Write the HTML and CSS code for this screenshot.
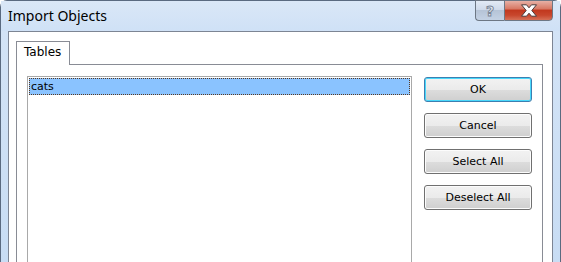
FILE: index.html
```html
<!DOCTYPE html>
<html>
<head>
<meta charset="utf-8">
<link rel="stylesheet" href="styles.css">
</head>
<body>
<div class="window">
  <div class="titlebar">
    <span class="title">Import Objects</span>
    <div class="caption-btns">
      <div class="cbtn help"><span>?</span></div>
      <div class="cbtn close">
        <svg width="22" height="13" viewBox="0 0 22 13">
          <path d="M3.5 0.8 H8.5 L11 3.8 L13.5 0.8 H18.5 L13.8 6.5 L18.5 12.2 H13.5 L11 9.2 L8.5 12.2 H3.5 L8.2 6.5 Z" fill="#fff" stroke="#4a3a3a" stroke-width="1" stroke-linejoin="round"/>
        </svg>
      </div>
    </div>
  </div>
  <div class="client">
    <div class="tabs">
      <div class="tab">Tables</div>
    </div>
    <div class="panel">
      <div class="listbox">
        <div class="item">cats</div>
      </div>
      <div class="buttons">
        <button class="btn default">OK</button>
        <button class="btn">Cancel</button>
        <button class="btn">Select All</button>
        <button class="btn">Deselect All</button>
      </div>
    </div>
  </div>
</div>
</body>
</html>
```
FILE: styles.css
```css
html, body {
  margin: 0;
  padding: 0;
  width: 561px;
  height: 262px;
  overflow: hidden;
  background: #fff;
}
.window {
  width: 561px;
  box-sizing: border-box;
  border: 1px solid #5a6a80;
  border-bottom: none;
  border-top-right-radius: 7px;
  border-top-left-radius: 7px;
  background: linear-gradient(to bottom, #dfeaf8 0px, #d3e3f6 30px, #c7dcf4 100%);
  display: flex;
  flex-direction: column;
  padding: 0 7px 0 7px;
}
.titlebar {
  flex: none;
  height: 30px;
  display: flex;
  align-items: flex-start;
  margin: 0 -7px;
  padding: 0 7px 0 7px;
  background: linear-gradient(to bottom, #dae7f7 0%, #cfe1f6 100%);
}
.title {
  font-family: "Noto Sans", "Open Sans", sans-serif;
  font-size: 14px;
  color: #000;
  margin-top: 5px;
}
.caption-btns {
  margin-left: auto;
  display: flex;
  margin-top: -1px;
}
.cbtn {
  height: 21px;
  box-sizing: border-box;
  border: 1px solid #6d7784;
  display: flex;
  align-items: center;
  justify-content: center;
}
.help {
  width: 29px;
  border-right: none;
  border-bottom-left-radius: 4px;
  background: linear-gradient(to bottom, #e2eaf5 0%, #cfdaea 45%, #b6c4d7 50%, #c4d2e4 100%);
}
.help span {
  font-family: "DejaVu Sans", sans-serif;
  font-weight: bold;
  font-size: 14px;
  color: #e8eef6;
  -webkit-text-stroke: 1px #7c8798;
  line-height: 1;
}
.close {
  width: 49px;
  border-bottom-right-radius: 4px;
  background: linear-gradient(to bottom, #e7b0a5 0%, #d87a66 40%, #c2391f 50%, #c8472d 75%, #d67057 100%);
}
.client {
  flex: none;
  height: 240px;
  background: #fff;
  border: 1px solid #7d8594;
  border-bottom: none;
  padding: 9px 9px 0 7px;
  display: flex;
  flex-direction: column;
}
.tabs {
  display: flex;
  flex: none;
}
.tab {
  width: 54px;
  height: 24px;
  box-sizing: border-box;
  border: 1px solid #898c95;
  border-bottom: none;
  font-family: "DejaVu Sans", sans-serif;
  font-size: 12px;
  padding: 3px 0 0 7px;
  color: #000;
  background: #fff;
  position: relative;
  margin-bottom: -1px;
  z-index: 1;
}
.panel {
  flex: 1;
  border: 1px solid #898c95;
  border-bottom: none;
  padding: 11px 9px 0 10px;
  display: flex;
  gap: 12px;
  align-items: flex-start;
}
.listbox {
  width: 385px;
  height: 250px;
  box-sizing: border-box;
  border: 1px solid #a9a9a9;
  padding: 1px;
  flex: none;
}
.item {
  height: 17px;
  box-sizing: border-box;
  background: #8ac3ff;
  border: 1px dotted #5a3a20;
  font-family: "DejaVu Sans", sans-serif;
  font-size: 11px;
  line-height: 15px;
  padding-left: 1px;
  color: #000;
}
.buttons {
  display: flex;
  flex-direction: column;
  gap: 11px;
  padding-top: 1px;
}
.btn {
  width: 108px;
  height: 25px;
  box-sizing: border-box;
  border: 1px solid #707070;
  border-radius: 3px;
  background: linear-gradient(to bottom, #f2f2f2 0%, #ebebeb 50%, #dddddd 50%, #cfcfcf 100%);
  font-family: "DejaVu Sans", sans-serif;
  font-size: 11px;
  color: #000;
  padding: 0;
  box-shadow: inset 0 0 0 1px #fcfcfc;
}
.btn.default {
  border-color: #3c7fb1;
  box-shadow: inset 0 0 0 1px #48d8fb;
}
```
